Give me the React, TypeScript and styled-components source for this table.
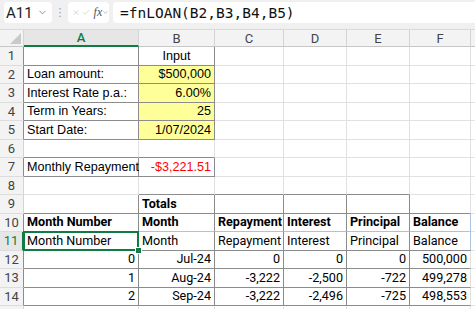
import React from 'react';
import styled, { createGlobalStyle, css } from 'styled-components';
import { ChevronDown, X, Check } from 'lucide-react';

const GlobalStyle = createGlobalStyle`
  html, body { margin: 0; padding: 0; background: #fff; }
  body { width: 475px; height: 309px; overflow: hidden; }
`;

// A..F, then a sliver of G at the right edge
const COLS = [115, 76, 69, 63, 63, 61, 60];
const LETTERS = ['A', 'B', 'C', 'D', 'E', 'F', ''];
const ROW_H = 18.5;
const GRID = '#e1e1e1';
const DARK = '#8c8c8c';
const BLUE = '#a9c4e2';
const GREEN = '#107c41';
const YELLOW = '#ffff99';

type Cell = {
  v?: string;
  align?: 'left' | 'right' | 'center';
  bold?: boolean;
  fill?: string;
  color?: string;
  face?: 'arial' | 'aptos';
};

const Page = styled.div`
  width: 475px;
  height: 309px;
  overflow: hidden;
  display: flex;
  flex-direction: column;
  background: #fff;
`;

const Toolbar = styled.div`
  height: 30px;
  flex: none;
  display: flex;
  align-items: center;
  gap: 4px;
  padding: 0 0 4px 4px;
  box-sizing: border-box;
  background: #f0f0f0;
  border-bottom: 1px solid #d9d9d9;
`;

const Box = styled.div<{ $w?: number; $grow?: boolean }>`
  height: 21px;
  box-sizing: border-box;
  background: #fff;
  border-radius: 4px;
  display: flex;
  align-items: center;
  ${(p) => (p.$w ? `width: ${p.$w}px;` : '')}
  ${(p) => (p.$grow ? 'flex: 1; border-radius: 4px 0 0 4px;' : 'flex: none;')}
`;

const NameText = styled.span`
  font-family: Roboto, 'Liberation Sans', sans-serif;
  font-size: 15px;
  color: #222;
  padding-left: 2px;
  flex: 1;
`;

const Dots = styled.span`
  width: 8px;
  display: flex;
  justify-content: center;
  color: #9a9a9a;
  font-size: 11px;
  font-family: 'DejaVu Sans', sans-serif;
`;

const Fx = styled.span`
  font-family: 'Liberation Serif', serif;
  font-style: italic;
  font-size: 12px;
  color: #555;
  margin-left: 3px;
`;

const Formula = styled.span`
  font-family: 'DejaVu Sans Mono', 'Liberation Mono', monospace;
  font-size: 14.5px;
  color: #111;
  padding-left: 7px;
  white-space: nowrap;
`;

const Sheet = styled.div`
  display: grid;
  grid-template-columns: 24px ${COLS.map((c) => `${c}px`).join(' ')};
  grid-template-rows: 17px repeat(15, ${ROW_H}px);
`;

const Corner = styled.div`
  background: #f3f3f3;
  border-right: 1px solid #d4d4d4;
  border-bottom: 1px solid #c6c6c6;
  box-sizing: border-box;
  display: flex;
  align-items: flex-end;
  justify-content: flex-end;
  padding: 0 2px 2px 0;
`;

const ColHead = styled.div<{ $sel?: boolean }>`
  box-sizing: border-box;
  background: ${(p) => (p.$sel ? '#e6e6e6' : '#f3f3f3')};
  border-right: 1px solid #d4d4d4;
  border-bottom: ${(p) => (p.$sel ? `2px solid ${GREEN}` : '1px solid #c6c6c6')};
  display: flex;
  align-items: center;
  justify-content: center;
  font-family: Roboto, 'Liberation Sans', sans-serif;
  font-size: 13px;
  color: ${(p) => (p.$sel ? GREEN : '#444')};
  font-weight: ${(p) => (p.$sel ? 500 : 400)};
`;

const RowHead = styled.div<{ $sel?: boolean; $edge: string }>`
  box-sizing: border-box;
  background: ${(p) => (p.$sel ? '#e6e6e6' : '#f3f3f3')};
  border-bottom: 1px solid #dcdcdc;
  border-right: ${(p) => (p.$sel ? `2px solid ${GREEN}` : `1px solid ${p.$edge}`)};
  display: flex;
  align-items: center;
  justify-content: center;
  font-family: Roboto, 'Liberation Sans', sans-serif;
  font-size: 13px;
  color: ${(p) => (p.$sel ? GREEN : '#444')};
`;

const CellBox = styled.div<{
  $right: string;
  $bottom: string;
  $align: string;
  $bold?: boolean;
  $fill?: string;
  $color?: string;
  $face: string;
  $sel?: boolean;
}>`
  position: relative;
  box-sizing: border-box;
  min-width: 0;
  border-right: 1px solid ${(p) => p.$right};
  border-bottom: 1px solid ${(p) => p.$bottom};
  background: ${(p) => p.$fill || '#fff'};
  color: ${(p) => p.$color || '#000'};
  display: flex;
  align-items: flex-end;
  justify-content: ${(p) =>
    p.$align === 'right' ? 'flex-end' : p.$align === 'center' ? 'center' : 'flex-start'};
  padding: 0 3px 2px 3px;
  white-space: nowrap;
  font-weight: ${(p) => (p.$bold ? 700 : 400)};
  ${(p) =>
    p.$face === 'arial'
      ? css`
          font-family: 'Liberation Sans', Arial, sans-serif;
          font-size: 12.6px;
        `
      : css`
          font-family: Roboto, 'Liberation Sans', sans-serif;
          font-size: 12.6px;
        `}
  ${(p) =>
    p.$sel &&
    css`
      &::after {
        content: '';
        position: absolute;
        left: -1px;
        top: -1px;
        right: -1px;
        bottom: -1px;
        border: 2px solid ${GREEN};
        pointer-events: none;
      }
      &::before {
        content: '';
        position: absolute;
        right: -4px;
        bottom: -4px;
        width: 5px;
        height: 5px;
        background: ${GREEN};
        border: 1px solid #fff;
        z-index: 2;
      }
    `}
`;

const L = (v: string, extra: Partial<Cell> = {}): Cell => ({ v, face: 'arial', ...extra });
const T = (v: string, extra: Partial<Cell> = {}): Cell => ({ v, face: 'aptos', ...extra });
const N = (v: string): Cell => ({ v, face: 'aptos', align: 'right' });

const heads = ['Month Number', 'Month', 'Repayment', 'Interest', 'Principal', 'Balance'];

const rows: Cell[][] = [
  [{}, L('Input', { align: 'center' })],
  [L('Loan amount:'), L('$500,000', { align: 'right', fill: YELLOW })],
  [L('Interest Rate p.a.:'), L('6.00%', { align: 'right', fill: YELLOW })],
  [L('Term in Years:'), L('25', { align: 'right', fill: YELLOW })],
  [L('Start Date:'), L('1/07/2024', { align: 'right', fill: YELLOW })],
  [],
  [L('Monthly Repayment'), L('-$3,221.51', { align: 'right', color: '#ff0000' })],
  [],
  [{}, T('Totals', { bold: true })],
  heads.map((h) => T(h, { bold: true })),
  heads.map((h) => T(h)),
  ['0', 'Jul-24', '0', '0', '0', '500,000'].map(N),
  ['1', 'Aug-24', '-3,222', '-2,500', '-722', '499,278'].map(N),
  ['2', 'Sep-24', '-3,222', '-2,496', '-725', '498,553'].map(N),
  [],
];

// rows and columns are 0-based: row 0 = sheet row 1, col 0 = column A
const boxed = (r: number, c: number) => {
  if (r < 0 || c < 0) return false;
  if (r <= 4 && c <= 1) return true;
  if (r === 6 && c <= 1) return true;
  if (r === 8 && c >= 1 && c <= 4) return true;
  if (r >= 9 && r <= 13 && c <= 5) return true;
  return false;
};

const rightColor = (r: number, c: number) => {
  if (c === 5 && (r === 9 || r === 10)) return BLUE;
  if (c === 5 && r >= 11) return GRID;
  return boxed(r, c) || boxed(r, c + 1) ? DARK : GRID;
};

const bottomColor = (r: number, c: number) => {
  if (r === 9 && c <= 5) return BLUE;
  return boxed(r, c) || boxed(r + 1, c) ? DARK : GRID;
};

const SEL_ROW = 10;
const SEL_COL = 0;

export default function App() {
  return (
    <Page>
      <GlobalStyle />
      <Toolbar>
        <Box $w={48}>
          <NameText>A11</NameText>
          <ChevronDown size={11} color="#666" strokeWidth={1.6} style={{ marginRight: 4 }} />
        </Box>
        <Dots>⋮</Dots>
        <Box $w={41}>
          <X size={11} color="#b0b0b0" strokeWidth={1.4} style={{ marginLeft: 4 }} />
          <Check size={11} color="#b0b0b0" strokeWidth={1.4} style={{ marginLeft: 2 }} />
          <Fx>fx</Fx>
          <ChevronDown size={9} color="#777" strokeWidth={1.6} />
        </Box>
        <Box $grow>
          <Formula>=fnLOAN(B2,B3,B4,B5)</Formula>
        </Box>
      </Toolbar>
      <Sheet>
        <Corner>
          <svg width="11" height="11" viewBox="0 0 11 11">
            <polygon points="11,0 11,11 0,11" fill="#c9c9c9" />
          </svg>
        </Corner>
        {LETTERS.map((l, i) => (
          <ColHead key={i} $sel={i === SEL_COL}>
            {l}
          </ColHead>
        ))}
        {rows.map((row, r) => (
          <React.Fragment key={r}>
            <RowHead $sel={r === SEL_ROW} $edge={boxed(r, 0) ? DARK : '#d4d4d4'}>
              {r < 14 ? r + 1 : ''}
            </RowHead>
            {COLS.map((_, c) => {
              const cell = row[c] || {};
              return (
                <CellBox
                  key={c}
                  $right={rightColor(r, c)}
                  $bottom={bottomColor(r, c)}
                  $align={cell.align || 'left'}
                  $bold={cell.bold}
                  $fill={cell.fill}
                  $color={cell.color}
                  $face={cell.face || 'aptos'}
                  $sel={r === SEL_ROW && c === SEL_COL}
                >
                  {cell.v}
                </CellBox>
              );
            })}
          </React.Fragment>
        ))}
      </Sheet>
    </Page>
  );
}
